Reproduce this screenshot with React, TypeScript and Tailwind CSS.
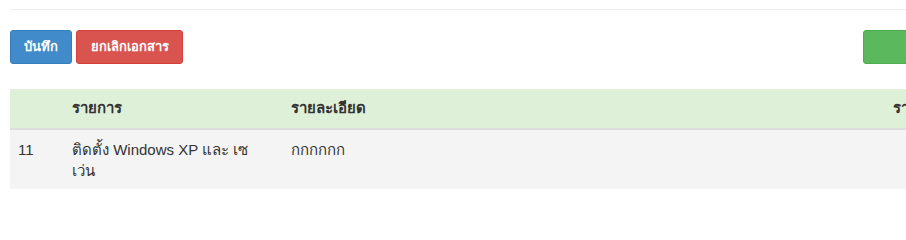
export default function App() {
  return (
    <div className="h-[219px] w-[906px] overflow-hidden bg-white font-['Liberation_Sans',Arial,sans-serif] text-[14px] text-[#333]">
      <div className="w-[1200px] pl-[10px]">
        <div className="mt-[9px] border-t border-[#eee]" />
        <div className="mt-[20px] flex items-center">
          <button className="h-[34px] w-[62px] rounded-[3px] border border-[#357ebd] bg-[#428bca] text-[13px] font-bold text-white">
            บันทึก
          </button>
          <button className="ml-[4px] h-[34px] w-[107px] rounded-[3px] border border-[#d43f3a] bg-[#d9534f] text-[13px] font-bold text-white">
            ยกเลิกเอกสาร
          </button>
          <button className="ml-[680px] h-[34px] w-[120px] rounded-[3px] border border-[#4cae4c] bg-[#5cb85c] text-[13px] font-bold text-white">
            &nbsp;
          </button>
        </div>
        <table className="mt-[25px] w-[1100px] border-collapse text-[15px]">
          <thead>
            <tr className="bg-[#dff0d8]">
              <th className="h-[40px] w-[54px] border-b-2 border-[#ddd] px-[8px] text-left font-bold" />
              <th className="w-[219px] border-b-2 border-[#ddd] px-[8px] text-left font-bold">รายการ</th>
              <th className="w-[602px] border-b-2 border-[#ddd] px-[8px] text-left font-bold">รายละเอียด</th>
              <th className="border-b-2 border-[#ddd] px-[8px] text-left font-bold">ราคา</th>
            </tr>
          </thead>
          <tbody>
            <tr className="bg-[#f4f4f4] align-top">
              <td className="px-[8px] pt-[9px] pb-[8px] leading-[21px]">11</td>
              <td className="px-[8px] pt-[9px] pb-[8px] leading-[21px]">
                ติดตั้ง Windows XP และ เซ
                <br />
                เว่น
              </td>
              <td className="px-[8px] pt-[9px] pb-[8px] leading-[21px]">กกกกกก</td>
              <td className="px-[8px] pt-[9px] pb-[8px] leading-[21px]" />
            </tr>
          </tbody>
        </table>
      </div>
    </div>
  );
}
